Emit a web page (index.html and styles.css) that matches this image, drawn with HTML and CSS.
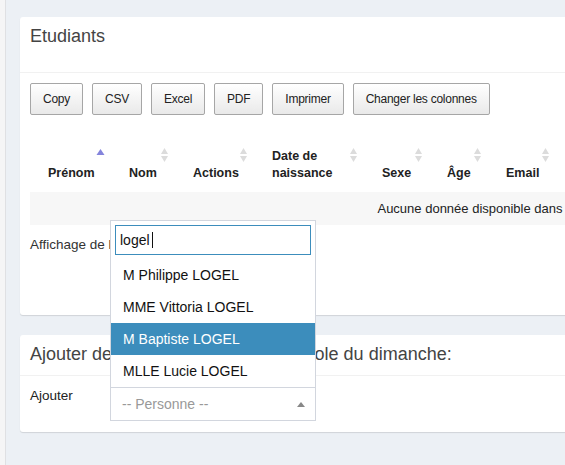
FILE: index.html
```html
<!DOCTYPE html>
<html lang="fr">
<head>
<meta charset="utf-8">
<title>Etudiants</title>
<link rel="stylesheet" href="styles.css">
</head>
<body>
<div class="page">
  <div class="strip"></div>
  <main class="content">
    <section class="box">
      <div class="box-header box-header-tall">
        <h3 class="box-title">Etudiants</h3>
      </div>
      <div class="box-body">
        <div class="dt-buttons">
          <button class="btn">Copy</button>
          <button class="btn">CSV</button>
          <button class="btn">Excel</button>
          <button class="btn">PDF</button>
          <button class="btn">Imprimer</button>
          <button class="btn">Changer les colonnes</button>
        </div>
        <table class="dt">
          <colgroup>
            <col class="c-prenom"><col class="c-nom"><col class="c-actions"><col class="c-date"><col class="c-sexe"><col class="c-age"><col class="c-email"><col class="c-tel"><col>
          </colgroup>
          <thead>
            <tr>
              <th>Prénom<svg class="sort" viewBox="0 0 7 15" width="7" height="15"><polygon class="up active" points="-0.5,7 3.5,1 7.5,7"/></svg></th>
              <th>Nom<svg class="sort" viewBox="0 0 7 15" width="7" height="15"><polygon class="up" points="0,6 3.5,0 7,6"/><polygon class="down" points="0,8 3.5,14 7,8"/></svg></th>
              <th>Actions<svg class="sort" viewBox="0 0 7 15" width="7" height="15"><polygon class="up" points="0,6 3.5,0 7,6"/><polygon class="down" points="0,8 3.5,14 7,8"/></svg></th>
              <th class="wrap">Date de naissance<svg class="sort" viewBox="0 0 7 15" width="7" height="15"><polygon class="up" points="0,6 3.5,0 7,6"/><polygon class="down" points="0,8 3.5,14 7,8"/></svg></th>
              <th>Sexe<svg class="sort" viewBox="0 0 7 15" width="7" height="15"><polygon class="up" points="0,6 3.5,0 7,6"/><polygon class="down" points="0,8 3.5,14 7,8"/></svg></th>
              <th>Âge<svg class="sort" viewBox="0 0 7 15" width="7" height="15"><polygon class="up" points="0,6 3.5,0 7,6"/><polygon class="down" points="0,8 3.5,14 7,8"/></svg></th>
              <th>Email<svg class="sort" viewBox="0 0 7 15" width="7" height="15"><polygon class="up" points="0,6 3.5,0 7,6"/><polygon class="down" points="0,8 3.5,14 7,8"/></svg></th>
              <th>Téléphone<svg class="sort" viewBox="0 0 7 15" width="7" height="15"><polygon class="up" points="0,6 3.5,0 7,6"/><polygon class="down" points="0,8 3.5,14 7,8"/></svg></th>
              <th>Adresse<svg class="sort" viewBox="0 0 7 15" width="7" height="15"><polygon class="up" points="0,6 3.5,0 7,6"/><polygon class="down" points="0,8 3.5,14 7,8"/></svg></th>
            </tr>
          </thead>
          <tbody>
            <tr class="empty-row"><td colspan="9">Aucune donnée disponible dans le tableau</td></tr>
          </tbody>
        </table>
        <div class="dt-footer">
          <div class="dt-info">Affichage de l'élément 0 à 0 sur 0 élément</div>
        </div>
      </div>
    </section>

    <section class="box">
      <div class="box-header">
        <h3 class="box-title">Ajouter des inscrits au groupe à l'école du dimanche:</h3>
      </div>
      <div class="box-body form-row">
        <label class="form-label">Ajouter</label>
        <div class="select2">
          <div class="select2-selection">
            <span class="placeholder">-- Personne --</span>
            <span class="arrow"></span>
          </div>
          <div class="select2-dropdown">
            <div class="search">
              <div class="search-field">logel<span class="caret"></span></div>
            </div>
            <ul class="results">
              <li class="option">M Philippe LOGEL</li>
              <li class="option">MME Vittoria LOGEL</li>
              <li class="option highlighted">M Baptiste LOGEL</li>
              <li class="option">MLLE Lucie LOGEL</li>
            </ul>
          </div>
        </div>
      </div>
    </section>
  </main>
</div>
</body>
</html>
```

FILE: styles.css
```css
* { box-sizing: border-box; }

html, body {
  margin: 0;
  padding: 0;
  width: 565px;
  height: 465px;
  overflow: hidden;
  background: #ecf0f5;
  font-family: "Liberation Sans", Arial, sans-serif;
  color: #333;
}

.page {
  display: flex;
  min-height: 465px;
}

.strip {
  flex: 0 0 6px;
  background: #f5f5f6;
  border-right: 1px solid #dfe0e3;
}

.content {
  flex: 0 0 auto;
  padding: 17px 0 0 14px;
}

.box {
  width: 960px;
  background: #fff;
  border-radius: 3px;
  box-shadow: 0 1px 1px rgba(0, 0, 0, 0.12);
  margin-bottom: 20px;
}

.box-header {
  padding: 9px 10px 11px;
  border-bottom: 1px solid #f1f1f1;
}

.box-header-tall {
  padding-bottom: 26px;
}

.box-title {
  margin: 0;
  font-size: 18px;
  line-height: 20px;
  font-weight: normal;
  color: #444;
}

.box-body {
  padding: 10px;
}

/* Buttons */
.dt-buttons {
  display: flex;
  gap: 9px;
}

.btn {
  height: 32px;
  padding: 0 12px;
  font-family: inherit;
  font-size: 12px;
  letter-spacing: -0.25px;
  color: #222;
  background: linear-gradient(#ffffff, #e9e9e9);
  border: 1px solid #a6a6a6;
  border-radius: 2px;
}

/* Table */
.dt {
  width: 100%;
  margin-top: 25px;
  border-collapse: collapse;
  table-layout: fixed;
}

.c-prenom { width: 81px; }
.c-nom { width: 64px; }
.c-actions { width: 79px; }
.c-date { width: 110px; }
.c-sexe { width: 65px; }
.c-age { width: 59px; }
.c-email { width: 68px; }
.c-tel { width: 200px; }

.dt th {
  position: relative;
  padding: 8px 10px 10px 18px;
  font-size: 12.5px;
  line-height: 17px;
  font-weight: bold;
  text-align: left;
  vertical-align: bottom;
  white-space: nowrap;
  color: #222;
}

.dt th.wrap {
  white-space: normal;
}

.sort {
  position: absolute;
  right: 7px;
  top: 8px;
  overflow: visible;
}

.sort .up,
.sort .down {
  fill: #dcdcdc;
}

.sort .up.active {
  fill: #8484dc;
}

.empty-row td {
  background: #f7f7f7;
  padding: 8px;
  font-size: 13px;
  line-height: 17px;
  text-align: center;
  color: #222;
}

.dt-footer {
  min-height: 80px;
  padding-top: 11px;
}

.dt-info {
  font-size: 13.5px;
  line-height: 17px;
  color: #333;
}

/* Form */
.form-row {
  display: flex;
  align-items: flex-start;
  padding-top: 11px;
  padding-bottom: 11px;
}

.form-label {
  flex: 0 0 80px;
  font-size: 13.5px;
  line-height: 17px;
  color: #222;
}

.select2 {
  position: relative;
  width: 206px;
}

.select2-selection {
  height: 34px;
  display: flex;
  align-items: center;
  justify-content: space-between;
  padding: 0 10px 0 11px;
  border: 1px solid #d2d6de;
}

.placeholder {
  font-size: 14px;
  color: #999;
}

.arrow {
  width: 0;
  height: 0;
  border-left: 4px solid transparent;
  border-right: 4px solid transparent;
  border-bottom: 5px solid #888;
}

.select2-dropdown {
  position: absolute;
  left: 0;
  bottom: 100%;
  width: 206px;
  background: #fff;
  border: 1px solid #d2d6de;
  border-bottom: none;
  z-index: 10;
}

.search {
  padding: 4px;
}

.search-field {
  height: 30px;
  border: 1px solid #3c8dbc;
  padding: 0 0 0 4px;
  display: flex;
  align-items: center;
  font-size: 14px;
  color: #111;
}

.caret {
  display: inline-block;
  width: 1px;
  height: 16px;
  background: #111;
  margin-left: 2px;
}

.results {
  list-style: none;
  margin: 0;
  padding: 0;
}

.option {
  height: 32px;
  padding: 6px 12px;
  font-size: 14px;
  line-height: 20px;
  color: #111;
}

.option.highlighted {
  background: #3c8dbc;
  color: #fff;
}
```
